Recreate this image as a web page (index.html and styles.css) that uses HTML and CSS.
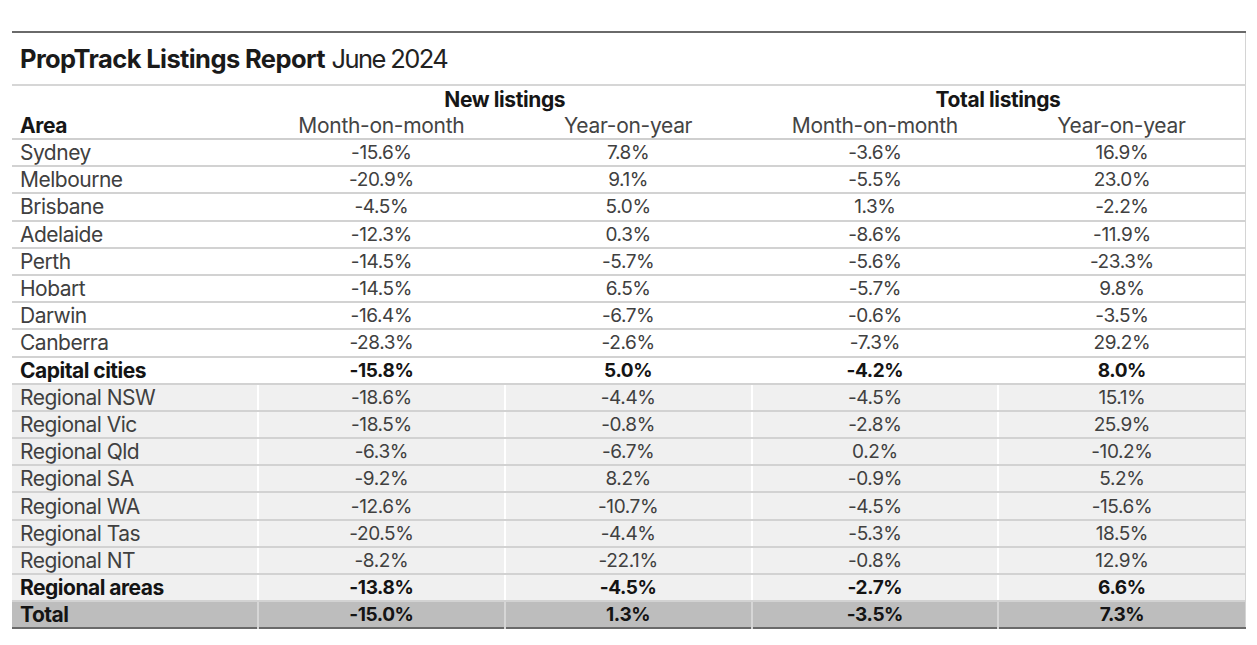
FILE: index.html
```html
<!DOCTYPE html>
<html lang="en">
<head>
<meta charset="utf-8">
<title>PropTrack Listings Report June 2024</title>
<link rel="stylesheet" href="styles.css">
</head>
<body>
<main class="page">
  <table class="report">
    <colgroup>
      <col class="c-area">
      <col class="c-val">
      <col class="c-val">
      <col class="c-val">
      <col class="c-val">
    </colgroup>
    <thead>
      <tr class="title-row">
        <th colspan="5" class="title"><strong>PropTrack Listings Report</strong> <span class="title-date">June 2024</span></th>
      </tr>
      <tr class="group-row">
        <th></th>
        <th colspan="2" class="group">New listings</th>
        <th colspan="2" class="group">Total listings</th>
      </tr>
      <tr class="sub-row">
        <th class="area-h">Area</th>
        <th class="sub">Month-on-month</th>
        <th class="sub">Year-on-year</th>
        <th class="sub">Month-on-month</th>
        <th class="sub">Year-on-year</th>
      </tr>
    </thead>
    <tbody>
      <tr><td>Sydney</td><td>-15.6%</td><td>7.8%</td><td>-3.6%</td><td>16.9%</td></tr>
      <tr><td>Melbourne</td><td>-20.9%</td><td>9.1%</td><td>-5.5%</td><td>23.0%</td></tr>
      <tr><td>Brisbane</td><td>-4.5%</td><td>5.0%</td><td>1.3%</td><td>-2.2%</td></tr>
      <tr><td>Adelaide</td><td>-12.3%</td><td>0.3%</td><td>-8.6%</td><td>-11.9%</td></tr>
      <tr><td>Perth</td><td>-14.5%</td><td>-5.7%</td><td>-5.6%</td><td>-23.3%</td></tr>
      <tr><td>Hobart</td><td>-14.5%</td><td>6.5%</td><td>-5.7%</td><td>9.8%</td></tr>
      <tr><td>Darwin</td><td>-16.4%</td><td>-6.7%</td><td>-0.6%</td><td>-3.5%</td></tr>
      <tr><td>Canberra</td><td>-28.3%</td><td>-2.6%</td><td>-7.3%</td><td>29.2%</td></tr>
      <tr class="sum"><td>Capital cities</td><td>-15.8%</td><td>5.0%</td><td>-4.2%</td><td>8.0%</td></tr>
      <tr class="reg"><td>Regional NSW</td><td>-18.6%</td><td>-4.4%</td><td>-4.5%</td><td>15.1%</td></tr>
      <tr class="reg"><td>Regional Vic</td><td>-18.5%</td><td>-0.8%</td><td>-2.8%</td><td>25.9%</td></tr>
      <tr class="reg"><td>Regional Qld</td><td>-6.3%</td><td>-6.7%</td><td>0.2%</td><td>-10.2%</td></tr>
      <tr class="reg"><td>Regional SA</td><td>-9.2%</td><td>8.2%</td><td>-0.9%</td><td>5.2%</td></tr>
      <tr class="reg"><td>Regional WA</td><td>-12.6%</td><td>-10.7%</td><td>-4.5%</td><td>-15.6%</td></tr>
      <tr class="reg"><td>Regional Tas</td><td>-20.5%</td><td>-4.4%</td><td>-5.3%</td><td>18.5%</td></tr>
      <tr class="reg"><td>Regional NT</td><td>-8.2%</td><td>-22.1%</td><td>-0.8%</td><td>12.9%</td></tr>
      <tr class="reg sum"><td>Regional areas</td><td>-13.8%</td><td>-4.5%</td><td>-2.7%</td><td>6.6%</td></tr>
      <tr class="total sum"><td>Total</td><td>-15.0%</td><td>1.3%</td><td>-3.5%</td><td>7.3%</td></tr>
    </tbody>
  </table>
</main>
</body>
</html>
```

FILE: styles.css
```css
html, body {
  margin: 0;
  padding: 0;
  background: #ffffff;
}

.page {
  padding: 31px 0 0 12px;
  font-family: "Inter", "Noto Sans", sans-serif;
  color: #3c3c3c;
}

.report {
  width: 1233px;
  border-collapse: collapse;
  table-layout: fixed;
  border-top: 2px solid #6a6a6a;
  border-bottom: 2px solid #6a6a6a;
  border-right: 1px solid #d4d4d4;
  font-size: 21px;
  letter-spacing: -0.4px;
}

.c-area { width: 246px; }
.c-val { width: 246.75px; }

.report th,
.report td {
  padding: 0;
  font-weight: 400;
  white-space: nowrap;
}

.title-row .title {
  height: 51px;
  text-align: left;
  padding-left: 8px;
  font-size: 25.5px;
  color: #1a1a1a;
  letter-spacing: -0.6px;
  border-bottom: 2px solid #d6d6d6;
}

.title strong {
  font-weight: 700;
}

.title-date {
  letter-spacing: -1.6px;
  color: #222222;
}

.group-row th {
  height: 26px;
  vertical-align: bottom;
}

.group {
  font-weight: 700 !important;
  color: #161616;
  text-align: center;
  letter-spacing: -0.4px;
}

.sub-row th {
  height: 26px;
  border-bottom: 2px solid #cfcfcf;
  vertical-align: middle;
}

.area-h {
  text-align: left;
  padding-left: 8px !important;
  font-weight: 700 !important;
  color: #161616;
}

.sub {
  text-align: center;
  color: #444444;
  letter-spacing: -0.3px;
}

.report tbody td {
  height: 25.2px;
  text-align: center;
  font-size: 19px;
  border-bottom: 2px solid #d2d2d2;
  border-left: 2px solid transparent;
  color: #404040;
}

.report tbody td:first-child {
  text-align: left;
  padding-left: 8px;
  border-left: none;
  font-size: 21px;
  letter-spacing: -0.5px;
}

.report tbody tr.reg td {
  background: #f0f0f0;
  border-left-color: #ffffff;
}

.report tbody tr.reg td:first-child {
  border-left: none;
}

.report tbody tr.sum td {
  font-weight: 700;
  color: #141414;
}

.report tbody tr.total td {
  background: #bdbdbd;
  border-left: 2px solid #d6d6d6;
  border-bottom: none;
}

.report tbody tr.total td:first-child {
  border-left: none;
}
```
